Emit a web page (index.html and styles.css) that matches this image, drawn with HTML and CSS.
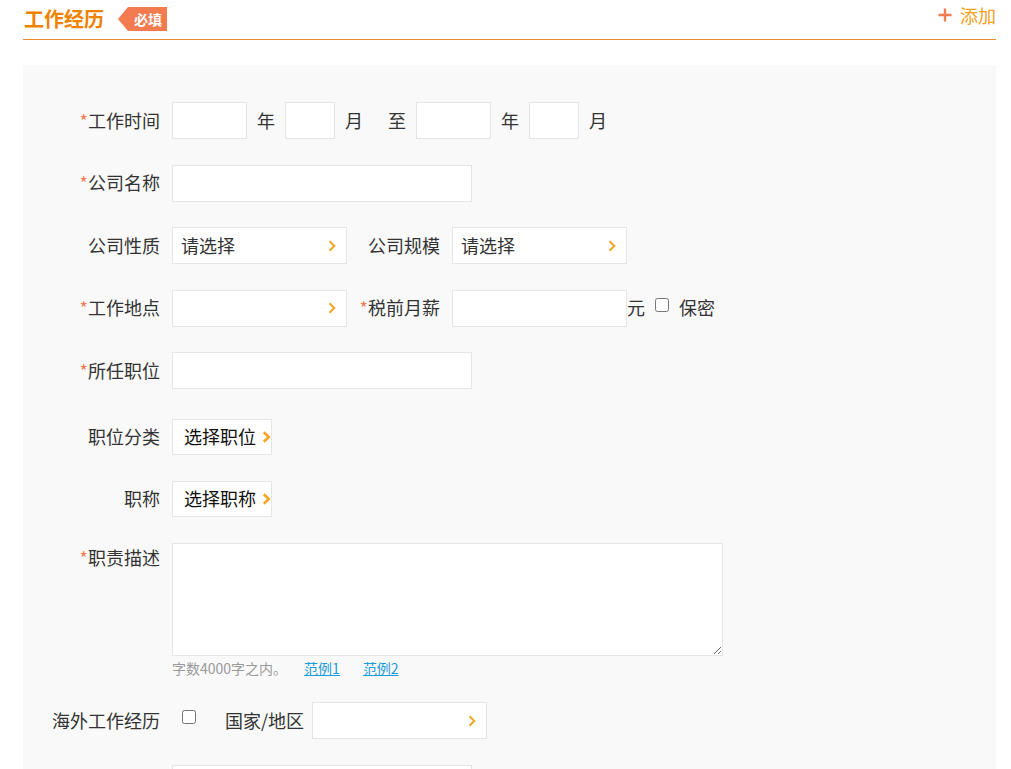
FILE: index.html
```html
<!DOCTYPE html>
<html lang="zh-CN">
<head>
<meta charset="utf-8">
<title>工作经历</title>
<link rel="stylesheet" href="styles.css">
</head>
<body>
<div class="page">
  <div class="head">
    <h2 class="title">工作经历</h2>
    <span class="tag">必填</span>
    <a class="add" href="#">
      <svg class="plus" width="14" height="14" viewBox="0 0 14 14"><path d="M7 0.5V13.5M0.5 7H13.5" stroke="#f47a50" stroke-width="2.4" fill="none"/></svg>
      <span>添加</span>
    </a>
  </div>

  <div class="panel">
    <div class="row r1">
      <label class="lbl"><i>*</i>工作时间</label>
      <input class="inp w75" type="text">
      <span class="unit">年</span>
      <input class="inp w50" type="text">
      <span class="unit">月</span>
      <span class="unit to">至</span>
      <input class="inp w75" type="text">
      <span class="unit">年</span>
      <input class="inp w50" type="text">
      <span class="unit">月</span>
    </div>

    <div class="row r2">
      <label class="lbl"><i>*</i>公司名称</label>
      <input class="inp w300" type="text">
    </div>

    <div class="row r3">
      <label class="lbl">公司性质</label>
      <div class="sel"><span>请选择</span><svg width="8" height="12" viewBox="0 0 8 12"><path d="M1.5 1.2L6.3 6L1.5 10.8" stroke="#f5a623" stroke-width="2" fill="none"/></svg></div>
      <label class="lbl2">公司规模</label>
      <div class="sel"><span>请选择</span><svg width="8" height="12" viewBox="0 0 8 12"><path d="M1.5 1.2L6.3 6L1.5 10.8" stroke="#f5a623" stroke-width="2" fill="none"/></svg></div>
    </div>

    <div class="row r4">
      <label class="lbl"><i>*</i>工作地点</label>
      <div class="sel"><span></span><svg width="8" height="12" viewBox="0 0 8 12"><path d="M1.5 1.2L6.3 6L1.5 10.8" stroke="#f5a623" stroke-width="2" fill="none"/></svg></div>
      <label class="lbl2"><i>*</i>税前月薪</label>
      <input class="inp w175" type="text">
      <span class="yuan">元</span>
      <input class="chk" type="checkbox">
      <span class="secret">保密</span>
    </div>

    <div class="row r5">
      <label class="lbl"><i>*</i>所任职位</label>
      <input class="inp w300" type="text">
    </div>

    <div class="row r6">
      <label class="lbl">职位分类</label>
      <div class="btn"><span>选择职位</span><svg width="9" height="12" viewBox="0 0 9 12"><path d="M1.8 1.2L6.8 6L1.8 10.8" stroke="#f5a623" stroke-width="2.6" fill="none"/></svg></div>
    </div>

    <div class="row r7">
      <label class="lbl">职称</label>
      <div class="btn"><span>选择职称</span><svg width="9" height="12" viewBox="0 0 9 12"><path d="M1.8 1.2L6.8 6L1.8 10.8" stroke="#f5a623" stroke-width="2.6" fill="none"/></svg></div>
    </div>

    <div class="row r8">
      <label class="lbl top"><i>*</i>职责描述</label>
      <div class="area-wrap">
        <textarea class="area"></textarea>
        <div class="hint">字数4000字之内。<a class="ex1" href="#">范例1</a><a class="ex2" href="#">范例2</a></div>
      </div>
    </div>

    <div class="row r9">
      <label class="lbl">海外工作经历</label>
      <input class="chk chk2" type="checkbox">
      <span class="country">国家/地区</span>
      <div class="sel sel2"><span></span><svg width="8" height="12" viewBox="0 0 8 12"><path d="M1.5 1.2L6.3 6L1.5 10.8" stroke="#f5a623" stroke-width="2" fill="none"/></svg></div>
    </div>

    <div class="row r10">
      <label class="lbl"></label>
      <input class="inp w300" type="text">
    </div>
  </div>
</div>
</body>
</html>
```

FILE: styles.css
```css
* { box-sizing: border-box; }

html, body {
  margin: 0;
  background: #fff;
  font-family: "Noto Sans CJK SC", "Noto Sans", sans-serif;
  color: #333;
  overflow: hidden;
}

.page {
  padding: 0 15px 0 23px;
  height: 769px;
}

.head {
  display: flex;
  align-items: center;
  height: 40px;
  border-bottom: 1px solid #e98a2b;
}

.title {
  margin: -2px 0 0 1px;
  font-size: 20px;
  font-weight: bold;
  line-height: 24px;
  color: #f08200;
}

.tag {
  margin-left: 14px;
  margin-top: -1px;
  height: 24px;
  width: 49px;
  padding-left: 16px;
  background: #f47a50;
  color: #fff;
  font-size: 14px;
  font-weight: bold;
  line-height: 24px;
  clip-path: polygon(10px 0, 100% 0, 100% 100%, 10px 100%, 0 50%);
}

.add {
  margin-left: auto;
  margin-top: -9px;
  display: flex;
  align-items: center;
  color: #f5a020;
  text-decoration: none;
  font-size: 18px;
  line-height: 24px;
}

.plus { margin-right: 8px; }

.panel {
  margin-top: 25px;
  background: #f9f9f9;
  padding-top: 37px;
  height: 720px;
}

.row {
  display: flex;
  align-items: center;
  height: 37px;
  margin-bottom: 25.5px;
  font-size: 18px;
}

.r5 { margin-bottom: 29px; }
.r8 { height: auto; align-items: flex-start; margin-bottom: 24px; }

.lbl {
  width: 137px;
  margin-right: 12px;
  text-align: right;
  line-height: 24px;
  margin-top: -2px;
  flex: none;
}

.lbl.top { line-height: 28px; margin-top: 0; }

.lbl i, .lbl2 i {
  font-style: normal;
  color: #f47a50;
}

.lbl2 {
  width: 93px;
  margin-right: 12px;
  text-align: right;
  line-height: 24px;
  margin-top: -2px;
  flex: none;
}

.inp {
  height: 37px;
  border: 1px solid #e6e6e6;
  background: #fff;
  outline: none;
  padding: 0 8px;
  font: inherit;
  flex: none;
}

.w75 { width: 75px; }
.w50 { width: 50px; }
.w175 { width: 175px; }
.w300 { width: 300px; }

.unit {
  margin: -2px 10px 0;
  line-height: 24px;
}

.unit.to { margin-left: 15px; }

.sel {
  width: 175px;
  height: 37px;
  border: 1px solid #e6e6e6;
  background: #fff;
  display: flex;
  align-items: center;
  justify-content: space-between;
  padding: 0 10px 0 8px;
  flex: none;
  color: #333;
}

.sel span { margin-top: -2px; }

.btn {
  width: 100px;
  height: 36px;
  border: 1px solid #e6e6e6;
  background: #fff;
  display: flex;
  align-items: center;
  padding: 0 0 0 11px;
  color: #111;
  flex: none;
}

.btn span { margin-top: -2px; }
.btn svg { margin-left: 6px; }

.yuan { line-height: 24px; margin-top: -2px; }

.chk {
  width: 14px;
  height: 14px;
  margin: 0 0 7px 10px;
  flex: none;
}

.secret {
  margin-left: 10px;
  margin-top: -2px;
  line-height: 24px;
}

.area-wrap {
  display: flex;
  flex-direction: column;
}

.area {
  width: 551px;
  height: 113px;
  border: 1px solid #e6e6e6;
  background: #fff;
  outline: none;
  margin: 0;
  display: block;
}

.hint {
  margin-top: 2px;
  font-size: 14px;
  line-height: 20px;
  color: #999;
}

.hint a {
  color: #1a9be0;
  text-decoration: underline;
}

.ex1 { margin-left: 17px; }
.ex2 { margin-left: 23px; }

.chk2 { margin-left: 10px; }

.country {
  margin-left: 29px;
  margin-top: -2px;
  line-height: 24px;
}

.sel2 { margin-left: 8px; }

.r10 { align-items: flex-start; }
```
